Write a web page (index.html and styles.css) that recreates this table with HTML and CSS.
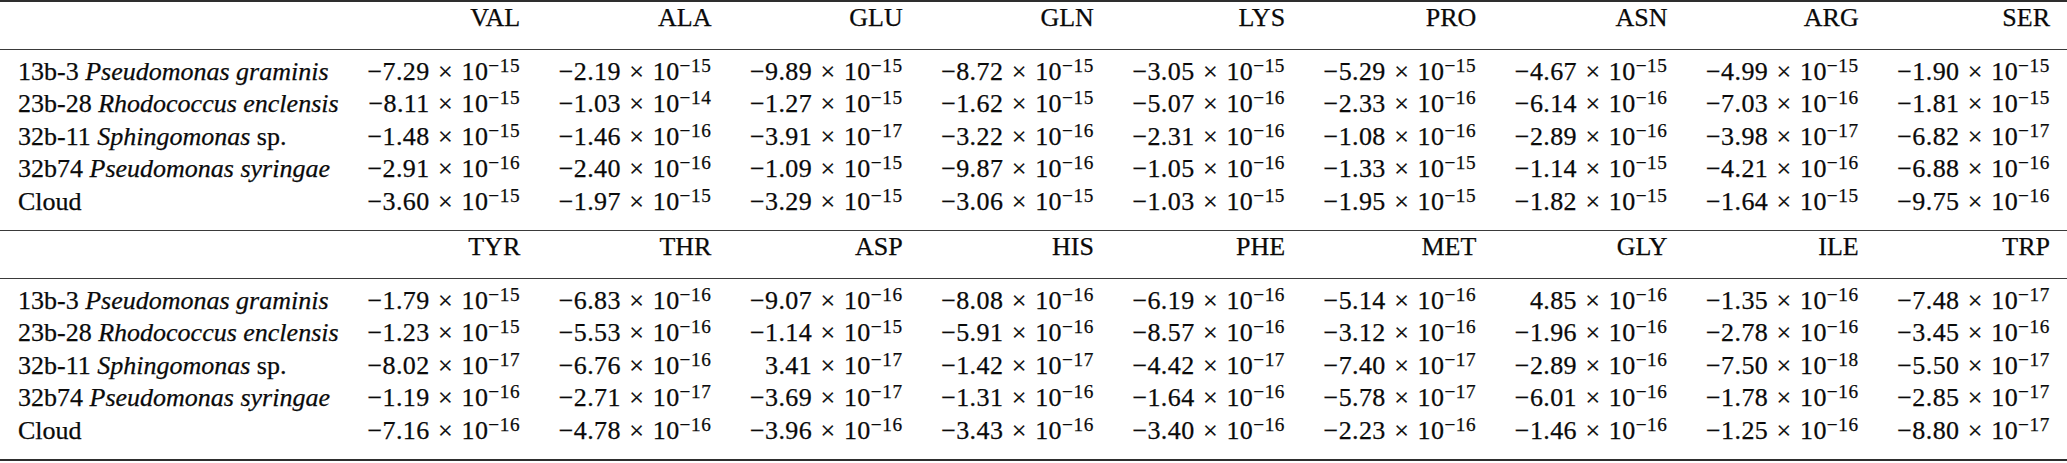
FILE: index.html
```html
<!DOCTYPE html>
<html lang="en">
<head>
    <meta charset="UTF-8">
    <meta name="viewport" content="width=device-width, initial-scale=1.0">
    <title>Amino acid table</title>
    <link rel="stylesheet" href="styles.css">
</head>
<body>
    <table class="data-table">
        <colgroup>
            <col class="col-label">
            <col span="9">
        </colgroup>

        <!-- first block -->
        <tbody class="block block-first">
            <tr class="head-row">
                <th class="label"></th>
                <th>VAL</th><th>ALA</th><th>GLU</th><th>GLN</th><th>LYS</th><th>PRO</th><th>ASN</th><th>ARG</th><th>SER</th>
            </tr>
            <tr class="row-first">
                <td class="label">13b-3 <i>Pseudomonas graminis</i></td>
                <td>&minus;7.29 × 10<sup>&minus;15</sup></td>
                <td>&minus;2.19 × 10<sup>&minus;15</sup></td>
                <td>&minus;9.89 × 10<sup>&minus;15</sup></td>
                <td>&minus;8.72 × 10<sup>&minus;15</sup></td>
                <td>&minus;3.05 × 10<sup>&minus;15</sup></td>
                <td>&minus;5.29 × 10<sup>&minus;15</sup></td>
                <td>&minus;4.67 × 10<sup>&minus;15</sup></td>
                <td>&minus;4.99 × 10<sup>&minus;15</sup></td>
                <td>&minus;1.90 × 10<sup>&minus;15</sup></td>
            </tr>
            <tr>
                <td class="label">23b-28 <i>Rhodococcus enclensis</i></td>
                <td>&minus;8.11 × 10<sup>&minus;15</sup></td>
                <td>&minus;1.03 × 10<sup>&minus;14</sup></td>
                <td>&minus;1.27 × 10<sup>&minus;15</sup></td>
                <td>&minus;1.62 × 10<sup>&minus;15</sup></td>
                <td>&minus;5.07 × 10<sup>&minus;16</sup></td>
                <td>&minus;2.33 × 10<sup>&minus;16</sup></td>
                <td>&minus;6.14 × 10<sup>&minus;16</sup></td>
                <td>&minus;7.03 × 10<sup>&minus;16</sup></td>
                <td>&minus;1.81 × 10<sup>&minus;15</sup></td>
            </tr>
            <tr>
                <td class="label">32b-11 <i>Sphingomonas</i> sp.</td>
                <td>&minus;1.48 × 10<sup>&minus;15</sup></td>
                <td>&minus;1.46 × 10<sup>&minus;16</sup></td>
                <td>&minus;3.91 × 10<sup>&minus;17</sup></td>
                <td>&minus;3.22 × 10<sup>&minus;16</sup></td>
                <td>&minus;2.31 × 10<sup>&minus;16</sup></td>
                <td>&minus;1.08 × 10<sup>&minus;16</sup></td>
                <td>&minus;2.89 × 10<sup>&minus;16</sup></td>
                <td>&minus;3.98 × 10<sup>&minus;17</sup></td>
                <td>&minus;6.82 × 10<sup>&minus;17</sup></td>
            </tr>
            <tr>
                <td class="label">32b74 <i>Pseudomonas syringae</i></td>
                <td>&minus;2.91 × 10<sup>&minus;16</sup></td>
                <td>&minus;2.40 × 10<sup>&minus;16</sup></td>
                <td>&minus;1.09 × 10<sup>&minus;15</sup></td>
                <td>&minus;9.87 × 10<sup>&minus;16</sup></td>
                <td>&minus;1.05 × 10<sup>&minus;16</sup></td>
                <td>&minus;1.33 × 10<sup>&minus;15</sup></td>
                <td>&minus;1.14 × 10<sup>&minus;15</sup></td>
                <td>&minus;4.21 × 10<sup>&minus;16</sup></td>
                <td>&minus;6.88 × 10<sup>&minus;16</sup></td>
            </tr>
            <tr class="row-last">
                <td class="label">Cloud</td>
                <td>&minus;3.60 × 10<sup>&minus;15</sup></td>
                <td>&minus;1.97 × 10<sup>&minus;15</sup></td>
                <td>&minus;3.29 × 10<sup>&minus;15</sup></td>
                <td>&minus;3.06 × 10<sup>&minus;15</sup></td>
                <td>&minus;1.03 × 10<sup>&minus;15</sup></td>
                <td>&minus;1.95 × 10<sup>&minus;15</sup></td>
                <td>&minus;1.82 × 10<sup>&minus;15</sup></td>
                <td>&minus;1.64 × 10<sup>&minus;15</sup></td>
                <td>&minus;9.75 × 10<sup>&minus;16</sup></td>
            </tr>
        </tbody>

        <!-- second block -->
        <tbody class="block block-second">
            <tr class="head-row">
                <th class="label"></th>
                <th>TYR</th><th>THR</th><th>ASP</th><th>HIS</th><th>PHE</th><th>MET</th><th>GLY</th><th>ILE</th><th>TRP</th>
            </tr>
            <tr class="row-first">
                <td class="label">13b-3 <i>Pseudomonas graminis</i></td>
                <td>&minus;1.79 × 10<sup>&minus;15</sup></td>
                <td>&minus;6.83 × 10<sup>&minus;16</sup></td>
                <td>&minus;9.07 × 10<sup>&minus;16</sup></td>
                <td>&minus;8.08 × 10<sup>&minus;16</sup></td>
                <td>&minus;6.19 × 10<sup>&minus;16</sup></td>
                <td>&minus;5.14 × 10<sup>&minus;16</sup></td>
                <td>4.85 × 10<sup>&minus;16</sup></td>
                <td>&minus;1.35 × 10<sup>&minus;16</sup></td>
                <td>&minus;7.48 × 10<sup>&minus;17</sup></td>
            </tr>
            <tr>
                <td class="label">23b-28 <i>Rhodococcus enclensis</i></td>
                <td>&minus;1.23 × 10<sup>&minus;15</sup></td>
                <td>&minus;5.53 × 10<sup>&minus;16</sup></td>
                <td>&minus;1.14 × 10<sup>&minus;15</sup></td>
                <td>&minus;5.91 × 10<sup>&minus;16</sup></td>
                <td>&minus;8.57 × 10<sup>&minus;16</sup></td>
                <td>&minus;3.12 × 10<sup>&minus;16</sup></td>
                <td>&minus;1.96 × 10<sup>&minus;16</sup></td>
                <td>&minus;2.78 × 10<sup>&minus;16</sup></td>
                <td>&minus;3.45 × 10<sup>&minus;16</sup></td>
            </tr>
            <tr>
                <td class="label">32b-11 <i>Sphingomonas</i> sp.</td>
                <td>&minus;8.02 × 10<sup>&minus;17</sup></td>
                <td>&minus;6.76 × 10<sup>&minus;16</sup></td>
                <td>3.41 × 10<sup>&minus;17</sup></td>
                <td>&minus;1.42 × 10<sup>&minus;17</sup></td>
                <td>&minus;4.42 × 10<sup>&minus;17</sup></td>
                <td>&minus;7.40 × 10<sup>&minus;17</sup></td>
                <td>&minus;2.89 × 10<sup>&minus;16</sup></td>
                <td>&minus;7.50 × 10<sup>&minus;18</sup></td>
                <td>&minus;5.50 × 10<sup>&minus;17</sup></td>
            </tr>
            <tr>
                <td class="label">32b74 <i>Pseudomonas syringae</i></td>
                <td>&minus;1.19 × 10<sup>&minus;16</sup></td>
                <td>&minus;2.71 × 10<sup>&minus;17</sup></td>
                <td>&minus;3.69 × 10<sup>&minus;17</sup></td>
                <td>&minus;1.31 × 10<sup>&minus;16</sup></td>
                <td>&minus;1.64 × 10<sup>&minus;16</sup></td>
                <td>&minus;5.78 × 10<sup>&minus;17</sup></td>
                <td>&minus;6.01 × 10<sup>&minus;16</sup></td>
                <td>&minus;1.78 × 10<sup>&minus;16</sup></td>
                <td>&minus;2.85 × 10<sup>&minus;17</sup></td>
            </tr>
            <tr class="row-last">
                <td class="label">Cloud</td>
                <td>&minus;7.16 × 10<sup>&minus;16</sup></td>
                <td>&minus;4.78 × 10<sup>&minus;16</sup></td>
                <td>&minus;3.96 × 10<sup>&minus;16</sup></td>
                <td>&minus;3.43 × 10<sup>&minus;16</sup></td>
                <td>&minus;3.40 × 10<sup>&minus;16</sup></td>
                <td>&minus;2.23 × 10<sup>&minus;16</sup></td>
                <td>&minus;1.46 × 10<sup>&minus;16</sup></td>
                <td>&minus;1.25 × 10<sup>&minus;16</sup></td>
                <td>&minus;8.80 × 10<sup>&minus;17</sup></td>
            </tr>
        </tbody>
    </table>
</body>
</html>
```

FILE: styles.css
```css
body {
    font-family: "Liberation Serif", "Times New Roman", serif;
    background-color: #ffffff;
    color: #000000;
    margin: 0;
    padding: 0;
}

.data-table {
    width: 2067px;
    border-collapse: collapse;
    table-layout: fixed;
    font-family: "Liberation Serif", "Times New Roman", serif;
    font-size: 26px;
    color: #0a0a0a;
    -webkit-text-stroke: 0.25px #0a0a0a; /* a bit heavier, like the printed table */
}

.col-label {
    width: 346px;
}

.data-table th,
.data-table td {
    padding: 0 17px 0 18px;
    line-height: 32.5px;
    text-align: right;
    white-space: nowrap;
    font-weight: normal;
}

.data-table td {
    letter-spacing: 0.4px;
    word-spacing: 1.5px;
}

    .data-table .label {
        text-align: left;
        letter-spacing: 0;
        word-spacing: 0;
    }

.data-table sup {
    font-size: 0.74em;
    line-height: 0;
    vertical-align: 0.42em;
    letter-spacing: 0.6px;
}

/* header rows */
.head-row th {
    padding-bottom: 14px;
    border-bottom: 1.5px solid #3a3a3a;
}

.block-first .head-row th {
    border-top: 2px solid #2e2e2e;
}

.row-first td {
    padding-top: 6px;
}

.row-last td {
    padding-bottom: 12px;
}

.block-first .row-last td {
    border-bottom: 1.5px solid #3a3a3a;
}

.block-second .row-last td {
    border-bottom: 2px solid #2e2e2e;
}
```
